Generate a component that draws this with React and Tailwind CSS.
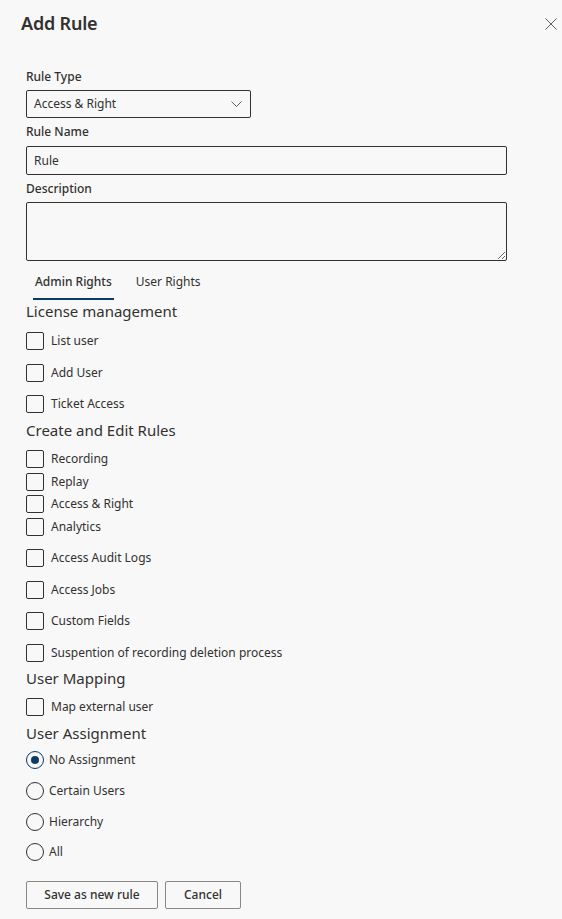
import { useState } from "react";

const font = { fontFamily: '"Noto Sans", "Open Sans", Arial, sans-serif' };

function Checkbox({ label, className = "" }) {
  return (
    <label className={`flex items-center h-[20px] gap-[7px] text-[12px] text-[#323130] ${className}`}>
      <span className="w-[18px] h-[18px] rounded-[2px] border border-[#323130] bg-[#f8f8f8] shrink-0" />
      <span>{label}</span>
    </label>
  );
}

function Radio({ label, checked, className = "" }) {
  return (
    <label className={`flex items-center h-[20px] gap-[5px] text-[12px] text-[#323130] ${className}`}>
      <span
        className={`w-[18px] h-[18px] rounded-full border shrink-0 flex items-center justify-center ${
          checked ? "border-[#0b3a66]" : "border-[#323130]"
        }`}
      >
        {checked && <span className="w-[8px] h-[8px] rounded-full bg-[#0b3a66]" />}
      </span>
      <span>{label}</span>
    </label>
  );
}

function Section({ title, className = "" }) {
  return <h2 className={`text-[15px] leading-[22px] text-[#323130] ${className}`}>{title}</h2>;
}

export default function App() {
  const [tab, setTab] = useState("admin");

  return (
    <div className="w-[562px] h-[919px] bg-[#f8f8f8] text-[#323130] overflow-hidden" style={font}>
      {/* Header */}
      <header className="h-[47px] flex items-center justify-between pl-[21px]">
        <h1 className="text-[18px] font-semibold tracking-[-0.2px]">Add Rule</h1>
        <button className="w-[22px] h-[32px] flex items-center justify-center text-[#605e5c]">
          <svg width="12" height="12" viewBox="0 0 12 12" fill="none" stroke="currentColor" strokeWidth="1">
            <path d="M0.5 0.5 L11.5 11.5 M11.5 0.5 L0.5 11.5" />
          </svg>
        </button>
      </header>

      <div className="px-[26px]">
        {/* Rule type */}
        <div className="mt-[20px] h-[20px] leading-[20px] text-[12px] font-medium">Rule Type</div>
        <div className="mt-[3px] w-[225px] h-[28px] border border-[#323130] rounded-[2px] flex items-center justify-between pl-[7px] pr-[8px] text-[12px]">
          <span>Access &amp; Right</span>
          <svg width="11" height="6" viewBox="0 0 11 6" fill="none" stroke="#605e5c" strokeWidth="1">
            <path d="M0.5 0.5 L5.5 5.5 L10.5 0.5" />
          </svg>
        </div>

        {/* Rule name */}
        <div className="mt-[4px] h-[20px] leading-[20px] text-[12px] font-medium">Rule Name</div>
        <input
          defaultValue="Rule"
          className="mt-[4px] block w-[481px] h-[29px] border border-[#323130] rounded-[2px] px-[7px] text-[12px] bg-transparent outline-none"
        />

        {/* Description */}
        <div className="mt-[4px] h-[20px] leading-[20px] text-[12px] font-medium">Description</div>
        <textarea className="mt-[3px] block w-[481px] h-[59px] border border-[#323130] rounded-[2px] px-[7px] py-[4px] text-[12px] bg-transparent outline-none resize-y" />

        {/* Tabs */}
        <div className="mt-[3px] ml-[1px] flex gap-[8px]">
          <button
            onClick={() => setTab("admin")}
            className={`relative h-[36px] px-[8px] text-[12px] ${tab === "admin" ? "font-medium" : ""}`}
          >
            Admin Rights
            {tab === "admin" && (
              <span className="absolute left-[6px] right-[6px] bottom-0 h-[2px] bg-[#0b3a66]" />
            )}
          </button>
          <button
            onClick={() => setTab("user")}
            className={`relative h-[36px] px-[8px] text-[12px] ${tab === "user" ? "font-medium" : ""}`}
          >
            User Rights
            {tab === "user" && (
              <span className="absolute left-[6px] right-[6px] bottom-0 h-[2px] bg-[#0b3a66]" />
            )}
          </button>
        </div>

        {/* License management */}
        <Section title="License management" />
        <Checkbox label="List user" className="mt-[9px]" />
        <Checkbox label="Add User" className="mt-[12px]" />
        <Checkbox label="Ticket Access" className="mt-[11px]" />

        {/* Create and Edit Rules */}
        <Section title="Create and Edit Rules" className="mt-[5px]" />
        <Checkbox label="Recording" className="mt-[8px]" />
        <Checkbox label="Replay" className="mt-[3px]" />
        <Checkbox label="Access & Right" className="mt-[2px]" />
        <Checkbox label="Analytics" className="mt-[3px]" />
        <Checkbox label="Access Audit Logs" className="mt-[11px]" />
        <Checkbox label="Access Jobs" className="mt-[12px]" />
        <Checkbox label="Custom Fields" className="mt-[11px]" />
        <Checkbox label="Suspention of recording deletion process" className="mt-[12px]" />

        {/* User Mapping */}
        <Section title="User Mapping" className="mt-[4px]" />
        <Checkbox label="Map external user" className="mt-[8px]" />

        {/* User Assignment */}
        <Section title="User Assignment" className="mt-[5px]" />
        <Radio label="No Assignment" checked className="mt-[6px]" />
        <Radio label="Certain Users" className="mt-[11px]" />
        <Radio label="Hierarchy" className="mt-[11px]" />
        <Radio label="All" className="mt-[10px]" />

        {/* Actions */}
        <div className="mt-[19px] flex gap-[7px]">
          <button className="h-[28px] w-[132px] border border-[#8a8886] rounded-[2px] text-[12px] font-medium">
            Save as new rule
          </button>
          <button className="h-[28px] w-[76px] border border-[#8a8886] rounded-[2px] text-[12px] font-medium">
            Cancel
          </button>
        </div>
      </div>
    </div>
  );
}
